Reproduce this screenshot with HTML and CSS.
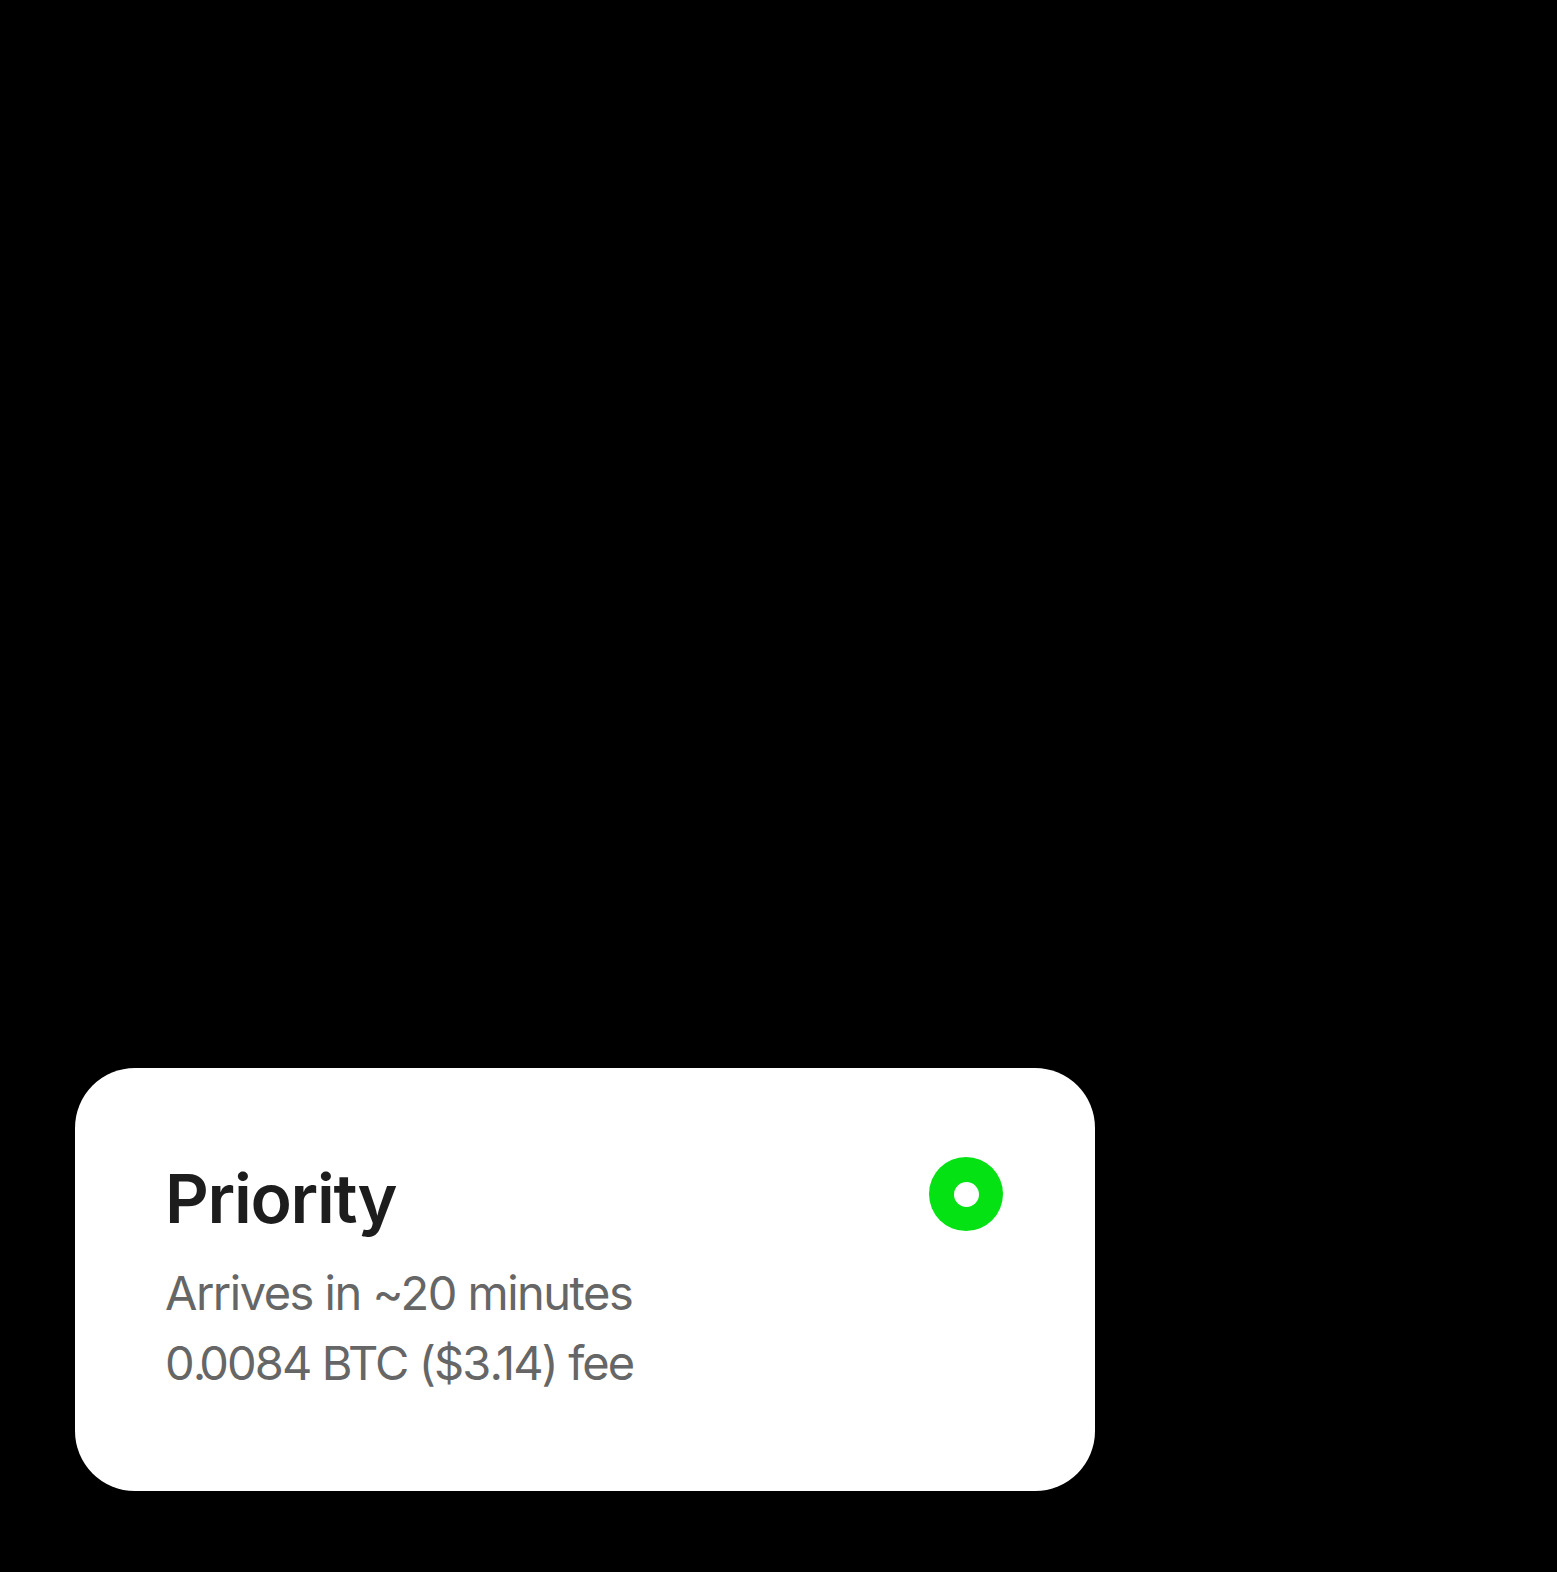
FILE: index.html
```html
<!DOCTYPE html>
<html lang="en">
<head>
<meta charset="utf-8">
<title>Priority</title>
<link rel="stylesheet" href="styles.css">
</head>
<body>
<main class="stage">
  <section class="card">
    <div class="card-head">
      <h1 class="title">Priority</h1>
      <span class="radio" aria-label="selected"></span>
    </div>
    <p class="line">Arrives in ~20 minutes</p>
    <p class="line line-fee">0<span class="dot">.</span>0084 BTC ($3<span class="dot">.</span>14) fee</p>
  </section>
</main>
</body>
</html>
```
FILE: styles.css
```css
html, body {
  margin: 0;
  padding: 0;
  background: #000;
}
.stage {
  min-height: 1572px;
  box-sizing: border-box;
  padding: 1068px 0 0 75px;
  font-family: Inter, "Noto Sans", sans-serif;
}
.card {
  width: 1020px;
  box-sizing: border-box;
  background: #fff;
  border-radius: 60px;
  padding: 88px 92px 93px 90px;
}
.card-head {
  display: flex;
  justify-content: space-between;
  align-items: center;
  margin-bottom: 18px;
}
.title {
  margin: 0;
  font-size: 68px;
  line-height: 84px;
  font-weight: 600;
  color: #1d1d1d;
  letter-spacing: -1.3px;
}
.radio {
  width: 74px;
  height: 74px;
  margin-bottom: 8px;
  border-radius: 50%;
  background: #04e214;
  position: relative;
  flex: none;
}
.radio::after {
  content: "";
  position: absolute;
  left: 50%;
  top: 50%;
  width: 25px;
  height: 25px;
  margin: -12.5px 0 0 -12.5px;
  border-radius: 50%;
  background: #fff;
}
.line {
  margin: 0;
  font-size: 47px;
  line-height: 70px;
  color: #666;
  letter-spacing: -1.5px;
}
.line-fee {
  letter-spacing: -1.9px;
}
.dot {
  letter-spacing: -7px;
}
```
